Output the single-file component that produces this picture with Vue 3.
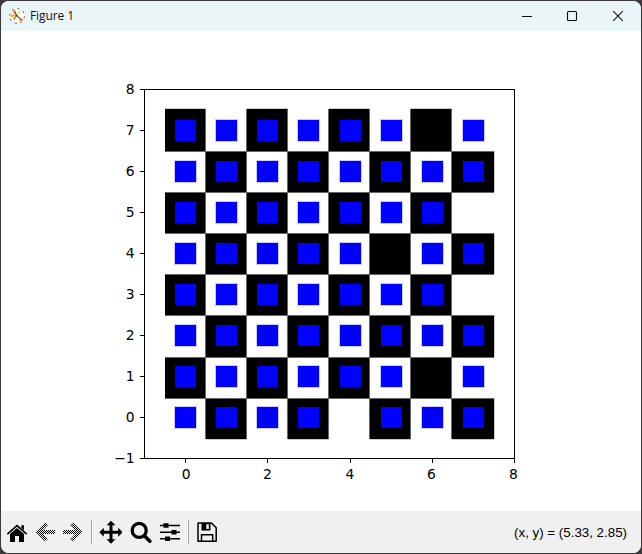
<script setup>
const colEdges = [165, 206, 247, 288, 329, 370, 411, 452, 494]
const rowEdges = [439, 398, 357, 315, 274, 233, 192, 151, 109]
const markX = [175, 216, 257, 298, 340, 381, 422, 463]
const markY = [407, 366, 325, 284, 243, 202, 161, 120]
const empty = new Set(['6,7', '7,5', '5,4', '7,3', '6,1', '4,0'])

const cells = []
const marks = []
for (let r = 0; r < 8; r++) {
  for (let c = 0; c < 8; c++) {
    const dark = (r + c) % 2 === 1
    if (dark) {
      cells.push({
        x: colEdges[c],
        y: rowEdges[r + 1],
        w: colEdges[c + 1] - colEdges[c],
        h: rowEdges[r] - rowEdges[r + 1],
        top: r === 7,
        bottom: r === 0,
        right: c === 7,
      })
    }
    if (!empty.has(`${c},${r}`)) marks.push({ x: markX[c], y: markY[r], dark })
  }
}
const seamsX = colEdges.slice(1, -1)
const seamsY = rowEdges.slice(1, -1)
const yTicks = [-1, 0, 1, 2, 3, 4, 5, 6, 7, 8].map((v) => ({
  label: String(v).replace('-', '\u2212'),
  y: Math.floor(458.5 - (v + 1) * 41) + 0.5,
}))
const labelX = [186.2, 267.5, 350, 431.5, 513.5]
const xTicks = [0, 2, 4, 6, 8].map((v, i) => ({
  label: v,
  x: Math.floor(144.5 + (v + 1) * 41.1) + 0.5,
  textX: labelX[i],
}))
</script>

<template>
  <div class="desktop">
    <div class="window">
      <header class="titlebar">
        <svg class="logo" width="16" height="16" viewBox="0 0 16 16">
          <circle cx="8" cy="8" r="7.4" fill="#fff" stroke="#666" stroke-width=".9" stroke-dasharray="2.6 3.2" />
          <path d="M8 8 3.6 3.6 6.2 2Z" fill="#f05a18" />
          <path d="M8 8 1.8 5.8V9.4Z" fill="#ffb000" />
          <path d="M8 8 11.8 13.4 14 11.4Z" fill="#ea5b16" />
          <path d="M8 8 9.8 3 11.2 4Z" fill="#e8cf38" />
          <path d="M8 8 5.4 12 3.8 10.4Z" fill="#56a83c" />
          <path d="M6 5 8.5 8 10 10M6 8h2.5" stroke="#333" stroke-width="1" fill="none" />
        </svg>
        <span class="title">Figure 1</span>
        <div class="controls">
          <svg width="46" height="29" viewBox="0 0 46 29"><path d="M18 14.5h10" /></svg>
          <svg width="46" height="29" viewBox="0 0 46 29"><rect x="17.5" y="9.5" width="9" height="9" rx="1" /></svg>
          <svg width="46" height="29" viewBox="0 0 46 29"><path d="M17.2 9.2l9.6 9.6M26.8 9.2l-9.6 9.6" /></svg>
        </div>
      </header>

      <svg class="figure" width="640" height="480" viewBox="1 31 640 480">
        <g shape-rendering="crispEdges">
          <g v-for="(c, i) in cells" :key="'c' + i">
            <rect :x="c.x" :y="c.y" :width="c.w" :height="c.h" />
            <rect v-if="c.top" class="rim" :x="c.x" :y="c.y - 1" :width="c.w" height="1" />
            <rect v-if="c.bottom" class="rim" :x="c.x" :y="c.y + c.h" :width="c.w" height="1" />
            <rect v-if="c.right" class="rim" :x="c.x + c.w" :y="c.y" width="1" :height="c.h" />
          </g>
          <rect v-for="x in seamsX" :key="'sx' + x" class="seam" :x="x - 1" y="109" width="1" height="330" />
          <rect v-for="y in seamsY" :key="'sy' + y" class="seam" x="165" :y="y" width="329" height="1" />
          <g v-for="(m, i) in marks" :key="'m' + i">
            <rect v-if="!m.dark" class="mark-halo" :x="m.x - 1" :y="m.y - 1" width="23" height="23" />
            <rect class="mark" :x="m.x" :y="m.y" width="21" height="21" />
          </g>
          <rect class="axes" x="144.5" y="89.5" width="370" height="369" />
          <path v-for="t in yTicks" :key="'ty' + t.label" class="axes" :d="`M140 ${t.y}H144`" />
          <path v-for="t in xTicks" :key="'tx' + t.label" class="axes" :d="`M${t.x} 459V463`" />
        </g>
        <text v-for="t in yTicks" :key="'y' + t.label" x="134.7" :y="t.y + 4.8" text-anchor="end">{{ t.label }}</text>
        <text v-for="t in xTicks" :key="'x' + t.label" :x="t.textX" y="479" text-anchor="middle">{{ t.label }}</text>
      </svg>

      <footer class="toolbar">
        <svg width="28" height="42" viewBox="0 0 28 42">
          <path d="M5.8 22.4 16 13.4l10.2 9-1.1 1.3L16 15.8l-9.1 7.9z" />
          <path d="M9 23l7-6 7 6v8h-5v-6h-4v6H9zM20.3 14.2H23v5l-2.7-2.4z" />
        </svg>
        <svg width="28" height="42" viewBox="0 0 28 42">
          <defs>
            <pattern id="dither" width="2" height="2" patternUnits="userSpaceOnUse">
              <path d="M0 0h1v1H0zM1 1h1v1H1z" fill="#000" shape-rendering="crispEdges" />
            </pattern>
          </defs>
          <path fill="url(#dither)" d="M6.5 21 16 11.5l3 2.6-5 4.9H26v4H14l5 5-3 2.6z" />
        </svg>
        <svg width="28" height="42" viewBox="0 0 28 42">
          <path fill="url(#dither)" d="M25.5 21 16 11.5l-3 2.6 5 4.9H6v4h12l-5 5 3 2.6z" />
        </svg>
        <i class="sep sep-first"></i>
        <svg width="30" height="42" viewBox="0 0 30 42">
          <path d="M19 10l4.5 4.5h-3v5.6h5.7v-3l4.5 4.4-4.5 4.5v-3h-5.7v5.5h3L19 33l-4.5-4.5h3V23h-5.7v3l-4.5-4.5 4.5-4.4v3h5.7v-5.6h-3z" transform="translate(0 -.3)" />
        </svg>
        <svg width="30" height="42" viewBox="0 0 30 42">
          <circle cx="17.2" cy="19.4" r="7" fill="none" stroke="#000" stroke-width="3.3" />
          <path d="M22.4 24.8l5.4 5.4" stroke="#000" stroke-width="3.6" stroke-linecap="round" />
        </svg>
        <svg width="28" height="42" viewBox="0 0 28 42">
          <path d="M8 14.5h20M8 21.2h20M8 27.8h20" stroke="#000" stroke-width="1.4" />
          <path d="M11.5 12.3h5v4.4h-5zM19.5 19h5v4.4h-5zM13 25.6h5v4.4h-5z" />
        </svg>
        <i class="sep sep-second"></i>
        <svg width="30" height="42" viewBox="0 0 30 42">
          <path d="M9 12h13.4l4.8 4.8v13.4H9z" fill="none" stroke="#000" stroke-width="1.5" stroke-linejoin="round" />
          <path d="M12.5 12h9v7.5h-9z" />
          <path d="M17.3 13.2h2.5v4.8h-2.5z" fill="#f0f0f0" />
          <path d="M12.5 30v-6.2h11.2V30" fill="none" stroke="#000" stroke-width="1.5" />
        </svg>
        <span class="coords">(x, y) = (5.33, 2.85)</span>
      </footer>
    </div>
  </div>
</template>

<style>
body {
  background: #3c383b;
}
</style>

<style scoped>
.desktop {
  box-sizing: border-box;
  width: 642px;
  height: 554px;
  padding: 1px;
  background: #3c383b;
}
.window {
  display: flex;
  flex-direction: column;
  width: 640px;
  height: 552px;
  border-radius: 8px;
  overflow: hidden;
  background: #fff;
}
.titlebar {
  display: flex;
  align-items: center;
  height: 30px;
  padding-left: 8px;
  background: #eaf5f8;
}
.title {
  margin-left: 5px;
  font: 12px/30px "Open Sans", "Noto Sans", sans-serif;
  letter-spacing: -0.1px;
  color: #111;
}
.controls {
  display: flex;
  margin-left: auto;
  margin-right: -1px;
}
.controls svg {
  flex: none;
}
.controls path,
.controls rect {
  fill: none;
  stroke: #111;
  stroke-width: 1.1;
}
.figure {
  display: block;
  flex: none;
}
.figure text {
  font: 13.89px "DejaVu Sans", sans-serif;
}
.rim {
  fill: #ccc;
}
.seam {
  fill: #666;
}
.mark {
  fill: #00f;
}
.mark-halo {
  fill: #ccccff;
}
.axes {
  fill: none;
  stroke: #000;
  stroke-width: 1;
}
.toolbar {
  display: flex;
  align-items: center;
  height: 42px;
  background: #f0f0f0;
}
.toolbar svg {
  flex: none;
}
.sep {
  width: 1px;
  height: 24px;
  background: #a5a5a5;
}
.sep-first {
  margin-left: 6px;
}
.sep-second {
  margin-left: 8px;
}
.coords {
  margin-left: auto;
  padding-right: 14px;
  font: 13.33px "Liberation Sans", sans-serif;
  color: #000;
}
</style>
